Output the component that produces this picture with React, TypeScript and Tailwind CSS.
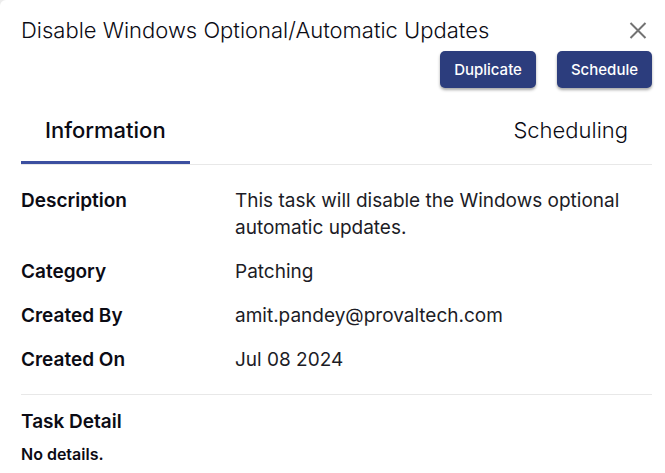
import { useState } from "react";

const details = [
  { label: "Description", value: "This task will disable the Windows optional automatic updates." },
  { label: "Category", value: "Patching" },
  { label: "Created By", value: "amit.pandey@provaltech.com" },
  { label: "Created On", value: "Jul 08 2024" },
];

function ActionButton({ children }: { children: string }) {
  return (
    <button
      type="button"
      className="h-[37px] rounded-[5px] bg-[#2c3d7d] px-3.5 pt-px text-[15px] font-medium text-white shadow-[0_2px_3px_rgba(0,0,0,0.35)]"
    >
      {children}
    </button>
  );
}

export default function App() {
  const [tab, setTab] = useState("information");
  return (
    <div className="min-h-screen bg-[#ececec]">
      <main className="min-h-screen rounded-tl-md bg-white pt-4 pr-[13px] pl-[21px] font-['Inter',sans-serif] text-[#0b0b14]">
        <header>
          <div className="flex items-center justify-between">
            <h1 className="text-[22px] leading-7 font-light">Disable Windows Optional/Automatic Updates</h1>
            <button type="button" aria-label="Close" className="flex size-7 items-center justify-center text-[#737373]">
              <svg viewBox="0 0 18 18" className="size-4.5" fill="none" stroke="currentColor" strokeWidth="2">
                <path d="M1.5 2 16.5 17M16.5 2 1.5 17" />
              </svg>
            </button>
          </div>
          <div className="mt-[7px] flex justify-end gap-[21px]">
            <ActionButton>Duplicate</ActionButton>
            <ActionButton>Schedule</ActionButton>
          </div>
        </header>
        <div role="tablist" className="mt-2 flex justify-between border-b border-[#e8e8e8] leading-8">
          <button
            type="button"
            role="tab"
            aria-selected={tab === "information"}
            onClick={() => setTab("information")}
            className="h-17 border-y-3 border-t-transparent border-b-[#3c4fa0] px-6 text-[22px] font-medium"
          >
            Information
          </button>
          <button
            type="button"
            role="tab"
            aria-selected={tab === "scheduling"}
            onClick={() => setTab("scheduling")}
            className="h-17 border-y-3 border-transparent px-6 text-[22px] font-light"
          >
            Scheduling
          </button>
        </div>
        <dl className="flex flex-col gap-[17px] border-b border-[#e8e8e8] pt-5.5 pb-[21px] text-[19px] leading-[27px]">
          {details.map((item) => (
            <div key={item.label} className="flex">
              <dt className="w-[214px] shrink-0 font-semibold">{item.label}</dt>
              <dd className="max-w-[400px] text-[#1c1c26]">{item.value}</dd>
            </div>
          ))}
        </dl>
        <section className="pt-[13px]">
          <h2 className="text-[19px] leading-7 font-semibold">Task Detail</h2>
          <p className="mt-1.5 text-[16px] leading-6 font-semibold">No details.</p>
        </section>
      </main>
    </div>
  );
}
